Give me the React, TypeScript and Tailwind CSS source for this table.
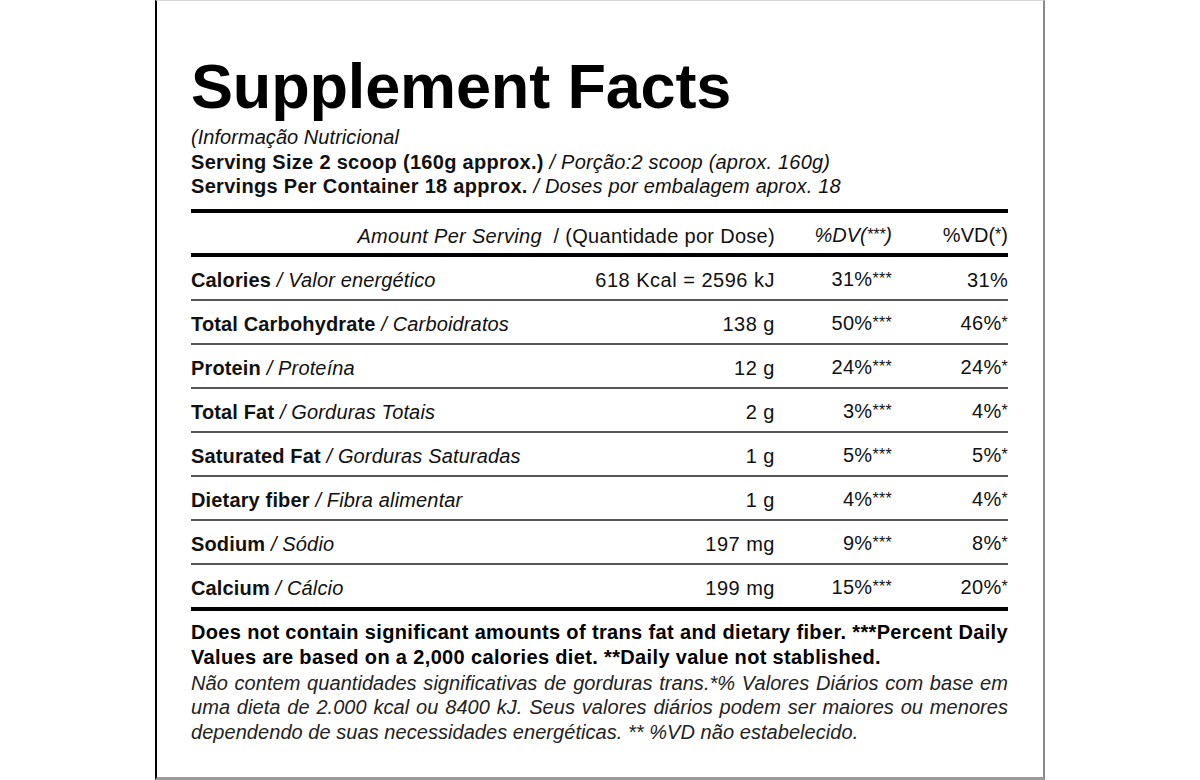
import React from "react";

type Row = {
  name: string;
  pt: string;
  amount: string;
  dv: string;
  dvStar: string;
  vd: string;
  vdStar: string;
};

const rows: Row[] = [
  { name: "Calories", pt: "Valor energético", amount: "618 Kcal = 2596 kJ", dv: "31%", dvStar: "***", vd: "31%", vdStar: "" },
  { name: "Total Carbohydrate", pt: "Carboidratos", amount: "138 g", dv: "50%", dvStar: "***", vd: "46%", vdStar: "*" },
  { name: "Protein", pt: "Proteína", amount: "12 g", dv: "24%", dvStar: "***", vd: "24%", vdStar: "*" },
  { name: "Total Fat", pt: "Gorduras Totais", amount: "2 g", dv: "3%", dvStar: "***", vd: "4%", vdStar: "*" },
  { name: "Saturated Fat", pt: "Gorduras Saturadas", amount: "1 g", dv: "5%", dvStar: "***", vd: "5%", vdStar: "*" },
  { name: "Dietary fiber", pt: "Fibra alimentar", amount: "1 g", dv: "4%", dvStar: "***", vd: "4%", vdStar: "*" },
  { name: "Sodium", pt: "Sódio", amount: "197 mg", dv: "9%", dvStar: "***", vd: "8%", vdStar: "*" },
  { name: "Calcium", pt: "Cálcio", amount: "199 mg", dv: "15%", dvStar: "***", vd: "20%", vdStar: "*" },
];

function Star({ s }: { s: string }) {
  if (!s) return null;
  return <span className="text-[16px] relative top-[-2px]">{s}</span>;
}

export default function App() {
  return (
    <div className="w-[1200px] h-[780px] bg-white font-['Liberation_Sans',Arial,sans-serif] text-[#111]">
      <div className="mx-auto w-[890px] h-[780px] box-border border-l-2 border-l-black border-t border-t-[#d8d8d8] border-r-2 border-r-[#8a8a8a] border-b-[3px] border-b-[#9a9a9a] pl-[34px] pr-[35px]">
        <h1 className="pt-[54px] text-[63px] font-bold leading-none tracking-[-0.15px] text-black">
          Supplement Facts
        </h1>
        <div className="mt-[7px] text-[20px] leading-[24.5px]">
          <div className="italic tracking-[0.05px]">(Informação Nutricional</div>
          <div>
            <span className="font-bold tracking-[0.3px]">Serving Size 2 scoop (160g approx.)</span>
            <span className="italic tracking-[0.2px]"> / Porção:2 scoop (aprox. 160g)</span>
          </div>
          <div>
            <span className="font-bold tracking-[0.3px]">Servings Per Container 18 approx.</span>
            <span className="italic tracking-[0.2px]"> / Doses por embalagem aprox. 18</span>
          </div>
        </div>

        <div className="mt-[10px] h-[4px] bg-black" />

        <div className="flex h-[40px] items-center pt-[6px] text-[20px] leading-[24px]">
          <div className="flex-1 text-right tracking-[0.3px]">
            <span className="italic">Amount Per Serving</span>
            <span>{"\u00a0 / (Quantidade por Dose)"}</span>
          </div>
          <div className="w-[117px] text-right italic">
            %DV(<Star s="***" />)
          </div>
          <div className="w-[116px] text-right">
            %VD(<Star s="*" />)
          </div>
        </div>

        <div className="h-[4px] bg-black" />

        {rows.map((r, i) => (
          <div key={r.name}>
            <div className="flex h-[42px] items-center pt-[5px] text-[20px] leading-[24px]">
              <div className="flex-1 tracking-[0.15px]">
                <span className="font-bold">{r.name}</span>
                <span className="italic"> / {r.pt}</span>
              </div>
              <div className="w-[230px] text-right tracking-[0.5px]">{r.amount}</div>
              <div className="w-[117px] text-right tracking-[0.3px]">
                {r.dv}
                <Star s={r.dvStar} />
              </div>
              <div className="w-[116px] text-right tracking-[0.3px]">
                {r.vd}
                <Star s={r.vdStar} />
              </div>
            </div>
            {i < rows.length - 1 ? (
              <div className="h-[2px] bg-[#555]" />
            ) : (
              <div className="h-[4px] bg-black" />
            )}
          </div>
        ))}

        <div className="pt-[9px] text-[20px] leading-[25px]">
          <div className="font-bold text-black tracking-[0.35px]">
            <div className="text-justify [text-align-last:justify]">
              Does not contain significant amounts of trans fat and dietary fiber. ***Percent Daily
            </div>
            <div>Values are based on a 2,000 calories diet. **Daily value not stablished.</div>
          </div>
          <div className="mt-[1px] italic text-[#222] tracking-[0.05px] leading-[24.5px]">
            <div className="text-justify [text-align-last:justify]">
              Não contem quantidades significativas de gorduras trans.*% Valores Diários com base em
            </div>
            <div className="text-justify [text-align-last:justify]">
              uma dieta de 2.000 kcal ou 8400 kJ. Seus valores diários podem ser maiores ou menores
            </div>
            <div>dependendo de suas necessidades energéticas. ** %VD não estabelecido.</div>
          </div>
        </div>
      </div>
    </div>
  );
}
